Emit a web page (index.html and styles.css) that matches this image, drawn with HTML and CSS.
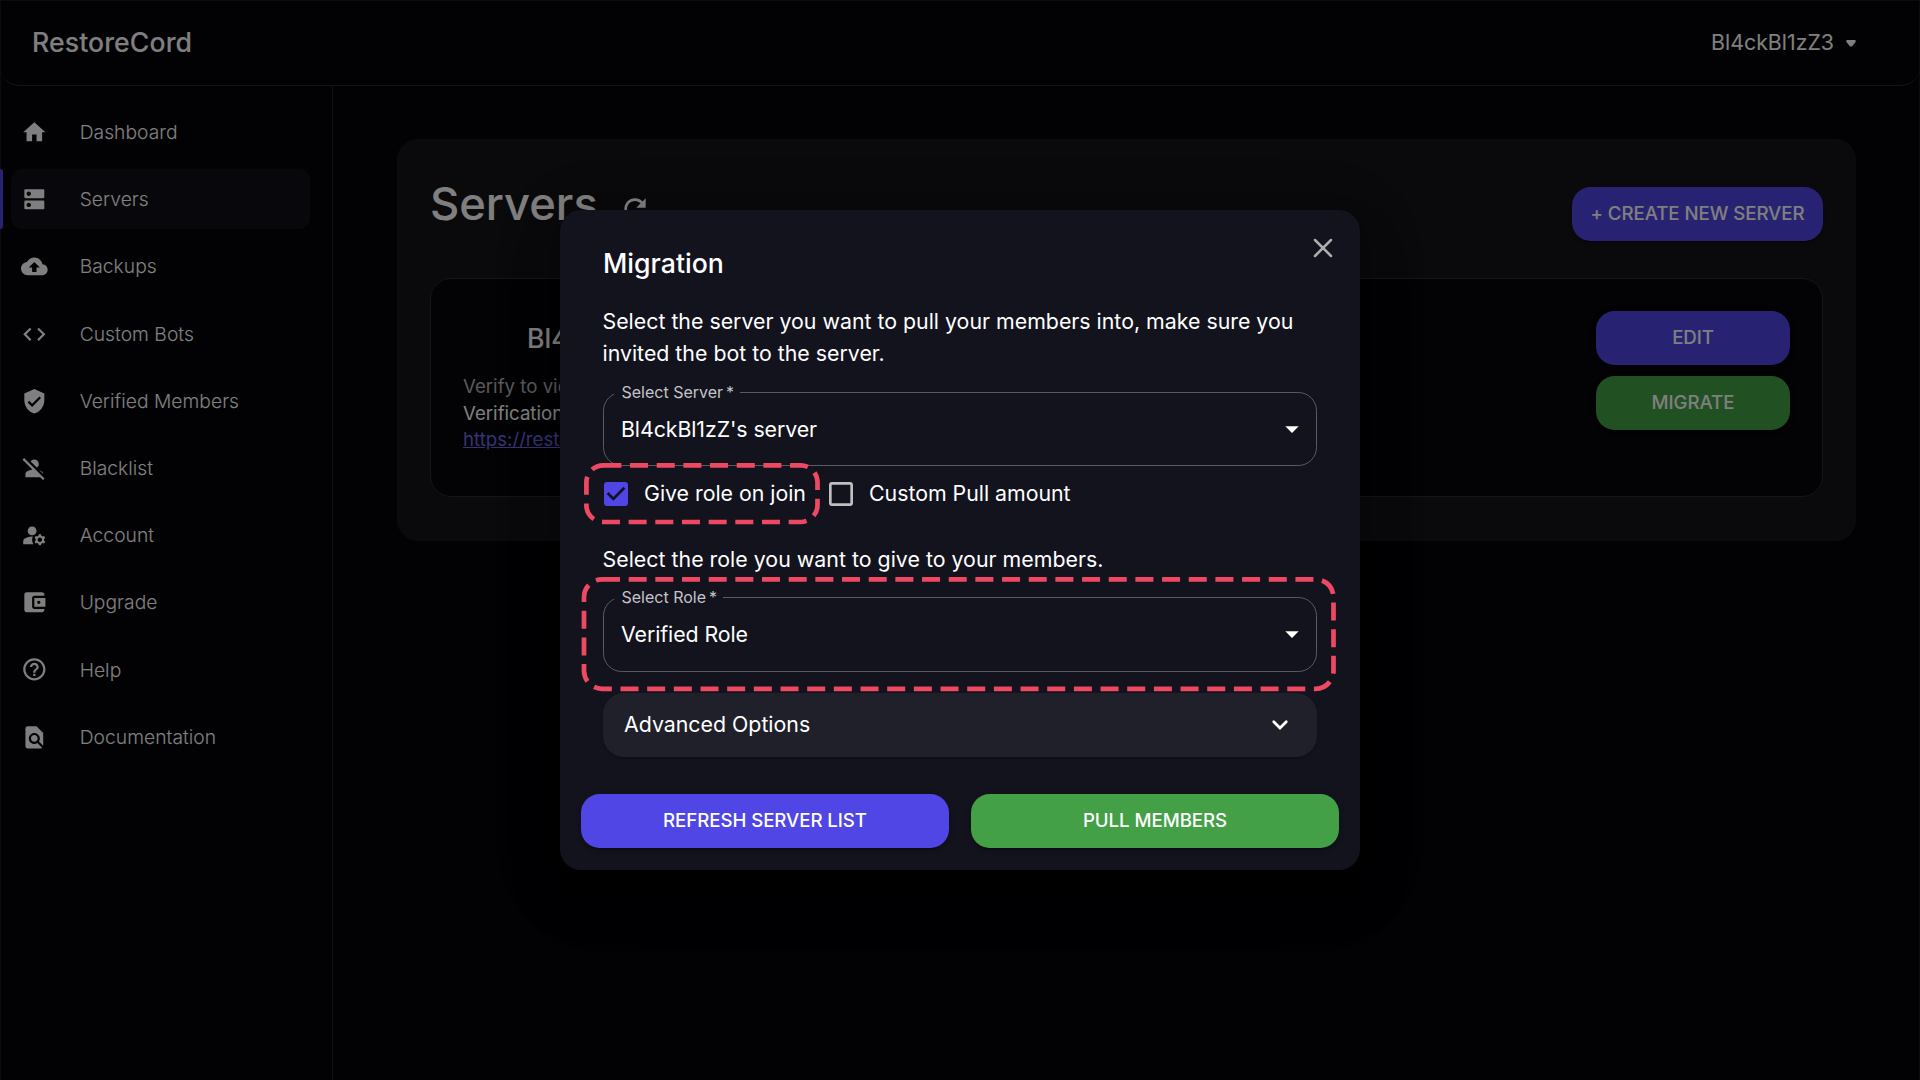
FILE: index.html
```html
<!DOCTYPE html>
<html lang="en">
<head>
<meta charset="utf-8">
<title>RestoreCord</title>
<link rel="stylesheet" href="styles.css">
</head>
<body>
<div class="app">
  <header class="topbar">
    <div class="brand">RestoreCord</div>
    <div class="user"><span>Bl4ckBl1zZ3</span>
      <svg class="user-caret" viewBox="0 0 10 7"><path d="M1 .8h8v.7L5.800 5.700H4.200L1 1.500z" fill="currentColor" stroke="currentColor" stroke-width="1.400" stroke-linejoin="round"/></svg>
    </div>
  </header>
  <div class="body">
    <nav class="sidebar">
      <a class="nav-item"><svg class="icon" viewBox="0 0 24 24"><path d="M10 20v-6h4v6h5v-8h3L12 3 2 12h3v8z"/></svg><span>Dashboard</span></a>
      <a class="nav-item active"><svg class="icon" viewBox="0 0 24 24"><path d="M20 13H4c-.55 0-1 .45-1 1v6c0 .55.45 1 1 1h16c.55 0 1-.45 1-1v-6c0-.55-.45-1-1-1zM7 19c-1.1 0-2-.9-2-2s.9-2 2-2 2 .9 2 2-.9 2-2 2zM20 3H4c-.55 0-1 .45-1 1v6c0 .55.45 1 1 1h16c.55 0 1-.45 1-1V4c0-.55-.45-1-1-1zM7 9c-1.1 0-2-.9-2-2s.9-2 2-2 2 .9 2 2-.9 2-2 2z"/></svg><span>Servers</span></a>
      <a class="nav-item"><svg class="icon" viewBox="0 0 24 24"><path d="M19.35 10.04C18.67 6.59 15.64 4 12 4 9.11 4 6.6 5.64 5.35 8.04 2.34 8.36 0 10.91 0 14c0 3.31 2.69 6 6 6h13c2.76 0 5-2.24 5-5 0-2.64-2.05-4.78-4.65-4.96zM14 13v4h-4v-4H7l5-5 5 5h-3z"/></svg><span>Backups</span></a>
      <a class="nav-item"><svg class="icon" viewBox="0 0 24 24"><path d="M9.4 16.6 4.8 12l4.6-4.6L8 6l-6 6 6 6 1.4-1.4zm5.2 0 4.6-4.6-4.6-4.6L16 6l6 6-6 6-1.4-1.4z"/></svg><span>Custom Bots</span></a>
      <a class="nav-item"><svg class="icon" viewBox="0 0 24 24"><path d="M12 1 3 5v6c0 5.55 3.84 10.74 9 12 5.16-1.26 9-6.45 9-12V5l-9-4zm-2 16-4-4 1.41-1.41L10 14.17l6.59-6.59L18 9l-8 8z"/></svg><span>Verified Members</span></a>
      <a class="nav-item"><svg class="icon" viewBox="0 0 24 24"><path d="M8.65 5.82C9.36 4.72 10.6 4 12 4c2.21 0 4 1.79 4 4 0 1.4-.72 2.64-1.82 3.35L8.65 5.82zM20 17.17c-.02-1.1-.63-2.11-1.61-2.62-.54-.28-1.13-.54-1.77-.76L20 17.17zm1.19 4.02L2.81 2.81 1.39 4.22l8.89 8.89c-1.81.23-3.39.79-4.67 1.45-1 .51-1.61 1.54-1.61 2.66V20h13.17l2.61 2.61 1.41-1.42z"/></svg><span>Blacklist</span></a>
      <a class="nav-item"><svg class="icon" viewBox="0 0 24 24"><circle cx="10" cy="8" r="4"/><path d="M10.67 13.02C10.45 13.01 10.23 13 10 13c-2.42 0-4.68.67-6.61 1.82-.88.52-1.39 1.5-1.39 2.53V20h9.26c-.79-1.13-1.26-2.51-1.26-4 0-1.07.25-2.07.67-2.98zM20.75 16c0-.22-.03-.42-.06-.63l1.14-1.01-1-1.73-1.45.49c-.32-.27-.68-.48-1.08-.63L18 11h-2l-.3 1.49c-.4.15-.76.36-1.08.63l-1.45-.49-1 1.73 1.14 1.01c-.03.21-.06.41-.06.63s.03.42.06.63l-1.14 1.01 1 1.73 1.45-.49c.32.27.68.48 1.08.63L16 21h2l.3-1.49c.4-.15.76-.36 1.08-.63l1.45.49 1-1.73-1.14-1.01c.03-.21.06-.41.06-.63zM17 18c-1.1 0-2-.9-2-2s.9-2 2-2 2 .9 2 2-.9 2-2 2z"/></svg><span>Account</span></a>
      <a class="nav-item"><svg class="icon" viewBox="0 0 24 24"><path d="M21 18v1c0 1.1-.9 2-2 2H5c-1.11 0-2-.9-2-2V5c0-1.1.89-2 2-2h14c1.1 0 2 .9 2 2v1h-9c-1.11 0-2 .9-2 2v8c0 1.1.89 2 2 2h9zm-9-2h10V8H12v8zm4-2.5c-.83 0-1.5-.67-1.5-1.5s.67-1.5 1.5-1.5 1.5.67 1.5 1.5-.67 1.5-1.5 1.5z"/></svg><span>Upgrade</span></a>
      <a class="nav-item"><svg class="icon" viewBox="0 0 24 24"><path d="M11 18h2v-2h-2v2zm1-16C6.48 2 2 6.48 2 12s4.48 10 10 10 10-4.48 10-10S17.520 2 12 2zm0 18c-4.410 0-8-3.590-8-8s3.590-8 8-8 8 3.590 8 8-3.590 8-8 8zm0-14c-2.210 0-4 1.790-4 4h2c0-1.100.9-2 2-2s2 .9 2 2c0 2-3 1.750-3 5h2c0-2.250 3-2.500 3-5 0-2.210-1.790-4-4-4z"/></svg><span>Help</span></a>
      <a class="nav-item"><svg class="icon" viewBox="0 0 24 24"><path d="M20 19.59V8l-6-6H6c-1.1 0-1.99.9-1.99 2L4 20c0 1.1.89 2 1.99 2H18c.45 0 .85-.15 1.19-.4l-4.43-4.43c-.8.52-1.74.83-2.76.83-2.76 0-5-2.24-5-5s2.24-5 5-5 5 2.24 5 5c0 1.02-.31 1.96-.83 2.75L20 19.59zM9 13c0 1.66 1.34 3 3 3s3-1.34 3-3-1.34-3-3-3-3 1.34-3 3z"/></svg><span>Documentation</span></a>
    </nav>
    <main class="main">
      <section class="panel">
        <div class="panel-head">
          <h1>Servers</h1>
          <svg class="refresh" viewBox="0 0 24 24"><path d="M17.65 6.35C16.2 4.900 14.210 4 12 4c-4.420 0-7.990 3.580-7.990 8s3.570 8 7.990 8c3.730 0 6.840-2.550 7.730-6h-2.080c-.82 2.330-3.040 4-5.650 4-3.310 0-6-2.690-6-6s2.690-6 6-6c1.660 0 3.140.69 4.220 1.780L13 11h7V4l-2.350 2.350z"/></svg>
          <button class="btn primary create">+ CREATE NEW SERVER</button>
        </div>
        <article class="server">
          <div class="server-info">
            <h2>Bl4c</h2>
            <p class="muted">Verify to view</p>
            <p>Verification</p>
            <a class="link">https://restore</a>
          </div>
          <div class="server-actions">
            <button class="btn primary">EDIT</button>
            <button class="btn success">MIGRATE</button>
          </div>
        </article>
      </section>
    </main>
  </div>
</div>

<div class="backdrop">
  <div class="modal">
    <svg class="close" viewBox="0 0 20 20"><path d="M2 2l16 16M18 2L2 18"/></svg>
    <div class="modal-body">
      <h3>Migration</h3>
      <p class="text">Select the server you want to pull your members into, make sure you<br>invited the bot to the server.</p>
      <div class="select server-select">
        <label>Select Server<i>*</i></label>
        <span>Bl4ckBl1zZ's server</span>
        <svg class="arrow" viewBox="0 0 24 24"><path d="M7 10l5 5 5-5z"/></svg>
      </div>
      <div class="checks">
        <div class="check first"><svg viewBox="0 0 24 24"><path class="on" d="M19 3H5c-1.110 0-2 .9-2 2v14c0 1.100.89 2 2 2h14c1.110 0 2-.9 2-2V5c0-1.100-.89-2-2-2zm-9 14-5-5 1.410-1.410L10 14.170l7.590-7.590L19 8l-9 9z"/></svg><span>Give role on join</span></div>
        <div class="check"><svg viewBox="0 0 24 24"><path class="off" d="M19 5v14H5V5h14m0-2H5c-1.100 0-2 .9-2 2v14c0 1.100.9 2 2 2h14c1.100 0 2-.9 2-2V5c0-1.100-.9-2-2-2z"/></svg><span>Custom Pull amount</span></div>
        <svg class="mark mark-check" width="238" height="64"><rect x="3.400" y="3.300" width="231.100" height="56.700" rx="17"/></svg>
      </div>
      <p class="text role-text">Select the role you want to give to your members.</p>
      <div class="select">
        <label>Select Role<i>*</i></label>
        <span>Verified Role</span>
        <svg class="arrow" viewBox="0 0 24 24"><path d="M7 10l5 5 5-5z"/></svg>
        <svg class="mark mark-role" width="757" height="117"><rect x="3" y="3.300" width="749.500" height="109.500" rx="18"/></svg>
      </div>
      <div class="accordion"><span>Advanced Options</span>
        <svg viewBox="0 0 24 24"><path d="M7.300 9.500l4.700 4.700 4.700-4.700"/></svg>
      </div>
    </div>
    <div class="modal-actions">
      <button class="btn primary">REFRESH SERVER LIST</button>
      <button class="btn success">PULL MEMBERS</button>
    </div>
  </div>
</div>
</body>
</html>
```
FILE: styles.css
```css
* { box-sizing: border-box; }
body {
  margin: 0;
  width: 1920px;
  height: 1080px;
  overflow: hidden;
  background: #050508;
  color: #fff;
  font-family: Inter, sans-serif;
  font-size: 21.33px;
}
h1, h2, h3, p { margin: 0; font-weight: 400; }
svg { display: block; fill: currentColor; flex: none; }

.app {
  display: flex;
  flex-direction: column;
  height: 1080px;
  border: 1px solid #161619;
  border-bottom: 0;
}
.topbar {
  display: flex;
  justify-content: space-between;
  align-items: center;
  height: 85px;
  margin: 0 -1px;
  padding: 0 64px 2px 32px;
  border-bottom: 1px solid #26262a;
  border-radius: 0 0 20px 20px;
}
.brand { font-size: 26.67px; font-weight: 500; letter-spacing: 0.08px; }
.user { display: flex; align-items: center; gap: 12px; }
.user-caret { width: 10px; height: 7px; margin-top: 3px; }

.body { display: flex; flex: 1; }
.sidebar {
  display: flex;
  flex-direction: column;
  gap: 7.2px;
  width: 332px;
  padding: 16.3px 22px 0 10px;
  border-right: 1px solid #232327;
}
.nav-item {
  display: flex;
  align-items: center;
  gap: 32px;
  height: 60px;
  padding-left: 10px;
  border-radius: 11px;
  font-size: 19.25px;
  font-weight: 300;
}
.nav-item span { padding-bottom: 0.5px; letter-spacing: 0.03px; }
.nav-item.active {
  position: relative;
  background: #101018;
}
.nav-item.active::before {
  content: "";
  position: absolute;
  left: -11px;
  top: 0;
  width: 3px;
  height: 60px;
  border-radius: 0 3px 3px 0;
  background: #4f46e5;
}
.icon { width: 26.67px; height: 26.67px; }

.main { flex: 1; padding: 53px 63px 0 64px; }
.panel {
  height: 402px;
  padding: 47px 32px 0;
  border: 1px solid #15151e;
  border-radius: 21px;
  background: #15151b;
}
.panel-head { display: flex; align-items: flex-start; height: 91px; }
h1 { margin-top: -10px; font-size: 45.3px; font-weight: 500; line-height: 54px; }
.refresh { width: 32px; height: 32px; margin: 6px 0 0 21px; }
.create { width: 251px; margin-left: auto; }
.server {
  display: flex;
  justify-content: space-between;
  height: 219px;
  padding: 32px;
  border: 1px solid #2a2a2f;
  border-radius: 21px;
  background: #06060b;
}
.server-info { padding-top: 1px; font-size: 18.67px; line-height: 26.67px; }
.server-info h2 { padding: 10px 0 20px 64px; font-size: 26.67px; font-weight: 500; line-height: 32px; }
.muted { color: #b2b2b4; }
.link { color: #6f66e0; text-decoration: underline; }
.server-actions { display: flex; flex-direction: column; gap: 11px; width: 194px; }

.btn {
  height: 54px;
  padding: 0;
  border: 0;
  border-radius: 18.67px;
  color: #fff;
  font: 500 18.67px/54px Inter, sans-serif;
  letter-spacing: -0.06px;
  flex: none;
  box-shadow: 0 4px 1px -3px rgba(0,0,0,.2), 0 3px 3px rgba(0,0,0,.14), 0 1px 7px rgba(0,0,0,.12);
}
.primary { background: #4f46e5; }
.success { background: #43a047; }

.backdrop {
  position: absolute;
  inset: 0;
  display: flex;
  align-items: center;
  justify-content: center;
  background: rgba(0, 0, 0, .5);
}
.modal {
  position: relative;
  width: 800px;
  height: 660px;
  border-radius: 21px;
  background: #13131e;
  box-shadow: 0 15px 20px -9px rgba(0,0,0,.2), 0 32px 51px 4px rgba(0,0,0,.14), 0 12px 61px 11px rgba(0,0,0,.12);
}
.close {
  position: absolute;
  top: 28px;
  right: 27px;
  width: 20px;
  height: 20px;
  stroke: #adadad;
  stroke-width: 2.5;
  stroke-linecap: round;
}
.modal-body { padding: 36px 43px 0; }
h3 { font-size: 26.67px; font-weight: 500; line-height: 34px; }
.text { margin-top: 25px; line-height: 32px; margin-left: -0.5px; }
.select {
  position: relative;
  display: flex;
  align-items: center;
  justify-content: space-between;
  height: 75px;
  margin-top: 23px;
  padding: 0 8px 2px 17px;
  border: 1px solid #5a5a62;
  border-radius: 18.67px;
  letter-spacing: -0.08px;
}
.server-select { height: 74px; padding-bottom: 1px; }
.select label {
  position: absolute;
  top: -11px;
  left: 10px;
  padding: 0 6px 0 7.500px;
  background: #13131e;
  color: #c4c4c7;
  font-size: 16px;
  line-height: 20px;
  letter-spacing: 0;
}
.select i { margin-left: 3px; font-style: normal; }
.arrow { width: 32px; height: 32px; }
.checks { position: relative; display: flex; height: 55px; padding-top: 1px; }
.check { display: flex; align-items: center; gap: 12px; }
.check span { padding-bottom: 2px; letter-spacing: -0.02px; }
.check.first { width: 225px; margin-left: -3px; }
.check svg { width: 32px; height: 32px; }
.on { fill: #4f46e5; }
.off { fill: #bfbfc2; }
.mark {
  position: absolute;
  overflow: visible;
  fill: none;
  stroke: #ee4963;
  stroke-width: 4.7;
  stroke-dasharray: 18 8.67;
}
.mark-check { left: -20px; top: -4px; }
.mark-role { left: -23px; top: -22px; }
.text.role-text { margin-top: 22px; letter-spacing: 0.02px; }
.role-text + .select { margin-top: 22px; }
.accordion {
  display: flex;
  align-items: center;
  justify-content: space-between;
  height: 64px;
  margin-top: 21px;
  padding: 0 21px 0 21px;
  border-radius: 21px;
  background: #20202a;
  box-shadow: 0 2px 2px rgba(0,0,0,.25);
}
.accordion span { padding-bottom: 2px; }
.accordion svg {
  width: 32px;
  height: 32px;
  fill: none;
  stroke: #fff;
  stroke-width: 2.1;
  stroke-linecap: round;
}
.modal-actions { display: flex; gap: 22px; padding: 37px 21px 0; }
.modal-actions .btn { flex: 1; }
```
